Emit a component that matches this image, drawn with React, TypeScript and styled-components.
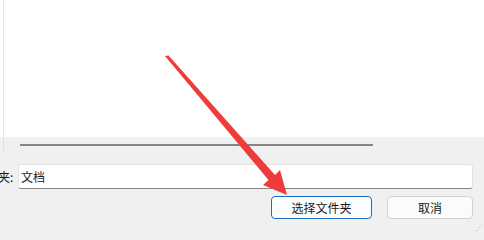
import styled, { createGlobalStyle } from "styled-components";

const GlobalStyle = createGlobalStyle`
  html, body {
    margin: 0;
    padding: 0;
    background: #f0f0f0;
  }
  body {
    font-family: "Noto Sans CJK SC", "Liberation Sans", sans-serif;
  }
`;

function App() {
  return (
    <Page>
      <GlobalStyle />
      <ListArea>
        <ListInner />
      </ListArea>
      <ScrollBand>
        <BandEdge />
        <ScrollThumb />
      </ScrollBand>
      <FolderRow>
        <Label>夹:</Label>
        <PathInput>文档</PathInput>
      </FolderRow>
      <ButtonRow>
        <DialogButton primary>选择文件夹</DialogButton>
        <DialogButton width={86}>取消</DialogButton>
      </ButtonRow>
      <Grip>⋰</Grip>
      <Arrow viewBox="0 0 484 233" width={484} height={233}>
        <polygon
          points="165,56 168.5,55.5 275,175 280,170 287,195 263,185 268.5,180"
          fill="#ee3b3b"
        />
      </Arrow>
    </Page>
  );
}

const Page = styled.div`
  position: relative;
  width: 484px;
  height: 233px;
  overflow: hidden;
  background: #f0f0f0;
  display: flex;
  flex-direction: column;
`;

const ListArea = styled.div`
  height: 137px;
  background: #ffffff;
  padding-left: 3px;
  display: flex;
`;

const ListInner = styled.div`
  flex: 1;
  border-left: 1px solid #e6e6e6;
`;

const ScrollBand = styled.div`
  height: 16px;
  display: flex;
  align-items: flex-start;
  padding-left: 3px;
`;

const BandEdge = styled.div`
  width: 1px;
  height: 16px;
  background: #e0e0e0;
`;

const ScrollThumb = styled.div`
  margin-top: 7px;
  margin-left: 16px;
  width: 353px;
  height: 2px;
  background: #858585;
`;

const FolderRow = styled.div`
  margin-top: 11px;
  display: flex;
  align-items: center;
  height: 25px;
`;

const Label = styled.span`
  width: 18px;
  margin-left: -2px;
  font-size: 12px;
  color: #1a1a1a;
  white-space: nowrap;
`;

const PathInput = styled.div`
  box-sizing: border-box;
  width: 455px;
  height: 25px;
  margin-left: 2px;
  background: #ffffff;
  border: 1px solid #e2e2e2;
  border-bottom: 1px solid #868686;
  border-radius: 3px;
  padding-left: 2px;
  font-size: 12px;
  line-height: 23px;
  color: #1a1a1a;
`;

const ButtonRow = styled.div`
  margin-top: 7px;
  display: flex;
  justify-content: flex-end;
  gap: 15px;
  padding-right: 11px;
`;

const DialogButton = styled.div<{ primary?: boolean; width?: number }>`
  box-sizing: border-box;
  width: ${({ width }) => width ?? 101}px;
  height: 23px;
  border-radius: 4px;
  border: 1px solid ${({ primary }) => (primary ? "#1a6fc0" : "#d3d3d3")};
  background: ${({ primary }) => (primary ? "#fdfdfd" : "#fbfbfb")};
  display: flex;
  align-items: center;
  justify-content: center;
  font-size: 12px;
  color: #1a1a1a;
`;

const Grip = styled.span`
  position: absolute;
  right: 1px;
  bottom: 1px;
  font-size: 7px;
  color: #b0b0b0;
`;

const Arrow = styled.svg`
  position: absolute;
  left: 0;
  top: 0;
  pointer-events: none;
`;

export default App;
